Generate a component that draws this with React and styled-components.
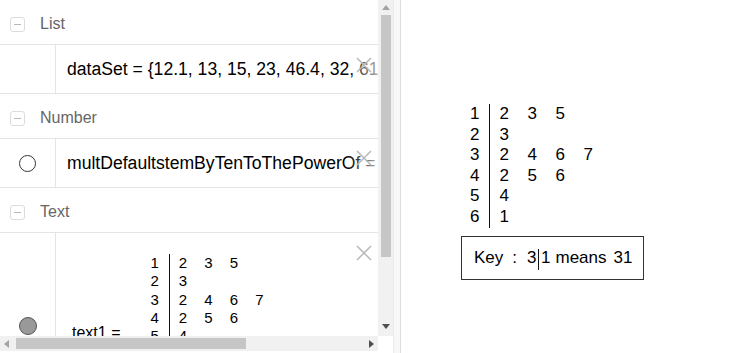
import React from 'react';
import styled, { createGlobalStyle } from 'styled-components';

const GlobalStyle = createGlobalStyle`
  html, body {
    margin: 0;
    padding: 0;
    background: #fff;
    overflow: hidden;
  }
  body {
    font-family: "Liberation Sans", Arial, sans-serif;
    color: #000;
  }
`;

const stemRows = [
  ['1', ['2', '3', '5']],
  ['2', ['3']],
  ['3', ['2', '4', '6', '7']],
  ['4', ['2', '5', '6']],
  ['5', ['4']],
  ['6', ['1']],
];

const Frame = styled.div`
  display: flex;
  width: 736px;
  height: 353px;
  overflow: hidden;
`;

const AlgebraView = styled.div`
  display: grid;
  grid-template-columns: 378px 15px;
  grid-template-rows: 336px 15px 2px;
  width: 393px;
  flex-shrink: 0;
`;

const Content = styled.div`
  overflow: hidden;
  display: flex;
  flex-direction: column;
`;

const Header = styled.div`
  display: flex;
  align-items: center;
  gap: 15px;
  height: 45px;
  box-sizing: border-box;
  padding: 4px 0 0 10px;
  border-bottom: 1px solid #e4e4e4;
  flex-shrink: 0;
  font-size: 16px;
  color: #666;
`;

const Collapse = styled.span`
  position: relative;
  width: 13px;
  height: 13px;
  border: 1px solid #dcdcdc;
  border-radius: 3px;
  &::after {
    content: '';
    position: absolute;
    left: 3px;
    right: 3px;
    top: 6px;
    height: 1px;
    background: #b8b8b8;
  }
`;

const Item = styled.div`
  position: relative;
  display: flex;
  height: ${({ $height }) => $height}px;
  box-sizing: border-box;
  border-bottom: ${({ $last }) => ($last ? 'none' : '1px solid #e4e4e4')};
  flex-shrink: 0;
`;

const Marker = styled.div`
  width: 56px;
  flex-shrink: 0;
  border-right: 1px solid #e4e4e4;
  display: flex;
  justify-content: center;
  align-items: ${({ $top }) => ($top ? 'flex-start' : 'center')};
  padding-top: ${({ $top }) => $top || 0}px;
  box-sizing: border-box;
`;

const Dot = styled.span`
  width: ${({ $filled }) => ($filled ? 18 : 17)}px;
  height: ${({ $filled }) => ($filled ? 18 : 17)}px;
  border-radius: 50%;
  box-sizing: border-box;
  border: 1px solid ${({ $filled }) => ($filled ? '#555' : '#333')};
  background: ${({ $filled }) => ($filled ? '#999' : '#fff')};
`;

const Formula = styled.div`
  flex: 1;
  display: flex;
  align-items: ${({ $top }) => ($top ? 'flex-start' : 'center')};
  padding-left: 11px;
  padding-top: ${({ $top }) => $top || 0}px;
  font-size: 17.6px;
  white-space: nowrap;
  overflow: hidden;
`;

const Fade = styled.div`
  position: absolute;
  top: 0;
  bottom: 0;
  right: 0;
  width: 30px;
  background: linear-gradient(to right, rgba(255, 255, 255, 0), rgba(255, 255, 255, 0.7));
  pointer-events: none;
`;

const Close = styled.svg`
  position: absolute;
  right: 6px;
  top: ${({ $top }) => $top}px;
  width: 16px;
  height: 16px;
`;

const TextLabel = styled.span`
  font-size: 16px;
  margin: 70px 30px 0 5px;
`;

const StemGrid = styled.div`
  display: grid;
  grid-template-columns: auto repeat(4, ${({ $leaf }) => $leaf}px);
  grid-auto-rows: ${({ $row }) => $row}px;
  font-size: ${({ $size }) => $size}px;
  line-height: ${({ $row }) => $row}px;
  margin-left: ${({ $offset }) => $offset || 0}px;
`;

const Stem = styled.span`
  grid-column: 1;
  text-align: right;
  padding-right: ${({ $gap }) => $gap}px;
  border-right: 1px solid #111;
`;

const Leaf = styled.span`
  padding-left: ${({ $gap }) => $gap}px;
`;

const StemPlot = ({ size, row, leaf, gap, offset }) => (
  <StemGrid $size={size} $row={row} $leaf={leaf} $offset={offset}>
    {stemRows.map(([stem, leaves]) => (
      <React.Fragment key={stem}>
        <Stem $gap={gap}>{stem}</Stem>
        {[0, 1, 2, 3].map((i) => (
          <Leaf key={i} $gap={gap - 1}>{leaves[i] || ''}</Leaf>
        ))}
      </React.Fragment>
    ))}
  </StemGrid>
);

const VTrack = styled.div`
  background: #f1f1f1;
  display: flex;
  flex-direction: column;
  align-items: center;
  justify-content: space-between;
  padding: 5px 0 7px;
  box-sizing: border-box;
`;

const HTrack = styled.div`
  background: #f1f1f1;
  display: flex;
  align-items: center;
  padding: 0 4px;
`;

const Corner = styled.div`
  background: #fff;
`;

const Thumb = styled.div`
  background: #c6c6c6;
  width: ${({ $w }) => $w}px;
  height: ${({ $h }) => $h}px;
  flex-shrink: 0;
`;

const ThumbSlot = styled.div`
  flex: 1;
  display: flex;
  flex-direction: ${({ $vertical }) => ($vertical ? 'column' : 'row')};
  align-items: center;
  padding: ${({ $vertical }) => ($vertical ? '5px 0 0' : '0 0 0 7px')};
`;

const Arrow = styled.span`
  width: 0;
  height: 0;
  flex-shrink: 0;
  border-style: solid;
  border-color: transparent;
  ${({ $dir, $dark }) => {
    const c = $dark ? '#505050' : '#a3a3a3';
    if ($dir === 'up') return `border-width: 0 4px 5px; border-bottom-color: ${c};`;
    if ($dir === 'down') return `border-width: 5px 4px 0; border-top-color: ${c};`;
    if ($dir === 'left') return `border-width: 4px 5px 4px 0; border-right-color: ${c};`;
    return `border-width: 4px 0 4px 5px; border-left-color: ${c};`;
  }}
`;

const Splitter = styled.div`
  width: 8px;
  flex-shrink: 0;
  background: #f8f8f8;
  border-left: 1px solid #ececec;
  border-right: 1px solid #dedede;
  box-sizing: border-box;
`;

const Graphics = styled.div`
  flex: 1;
  background: #fff;
  display: flex;
  flex-direction: column;
  align-items: flex-start;
  padding: 104px 0 0 60px;
  gap: 8px;
`;

const KeyBox = styled.div`
  width: 183px;
  height: 44px;
  box-sizing: border-box;
  border: 1px solid #333;
  display: flex;
  align-items: center;
  padding-left: 12px;
  font-size: 17px;
  white-space: pre;
`;

const Colon = styled.span`
  margin: 0 10px 0 9px;
`;

const Bar = styled.span`
  display: inline-block;
  width: 1px;
  height: 21px;
  background: #111;
  margin: 0 2px 0 1.5px;
  align-self: center;
  transform: translateY(2px);
`;

const Means = styled.span`
  margin: 0 7px 0 5px;
`;

const CloseIcon = ({ top }) => (
  <Close $top={top} viewBox="0 0 16 16">
    <path d="M1 1 L15 15 M15 1 L1 15" stroke="#b8b8b8" strokeWidth="1.5" fill="none" />
  </Close>
);

export default function App() {
  return (
    <>
      <GlobalStyle />
      <Frame>
        <AlgebraView>
          <Content>
            <Header>
              <Collapse />
              List
            </Header>
            <Item $height={49}>
              <Marker />
              <Formula>dataSet = {'{'}12.1, 13, 15, 23, 46.4, 32, 61</Formula>
              <Fade />
              <CloseIcon top={12} />
            </Item>
            <Header>
              <Collapse />
              Number
            </Header>
            <Item $height={49}>
              <Marker>
                <Dot />
              </Marker>
              <Formula>multDefaultstemByTenToThePowerOf = 1</Formula>
              <Fade />
              <CloseIcon top={11} />
            </Item>
            <Header>
              <Collapse />
              Text
            </Header>
            <Item $height={140} $last>
              <Marker $top={84}>
                <Dot $filled />
              </Marker>
              <Formula $top={21}>
                <TextLabel>text1 =</TextLabel>
                <StemPlot size={15} row={18.3} leaf={25.5} gap={10} />
              </Formula>
              <CloseIcon top={12} />
            </Item>
          </Content>
          <VTrack>
            <Arrow $dir="up" />
            <ThumbSlot $vertical>
              <Thumb $w={10} $h={242} />
            </ThumbSlot>
            <Arrow $dir="down" $dark />
          </VTrack>
          <HTrack>
            <Arrow $dir="left" />
            <ThumbSlot>
              <Thumb $w={230} $h={11} />
            </ThumbSlot>
            <Arrow $dir="right" $dark />
          </HTrack>
          <Corner />
          <Corner />
          <Corner />
        </AlgebraView>
        <Splitter />
        <Graphics>
          <StemPlot size={17} row={20.6} leaf={28} gap={10} offset={9} />
          <KeyBox>
            Key<Colon>:</Colon>3<Bar />1<Means>means</Means>31
          </KeyBox>
        </Graphics>
      </Frame>
    </>
  );
}
